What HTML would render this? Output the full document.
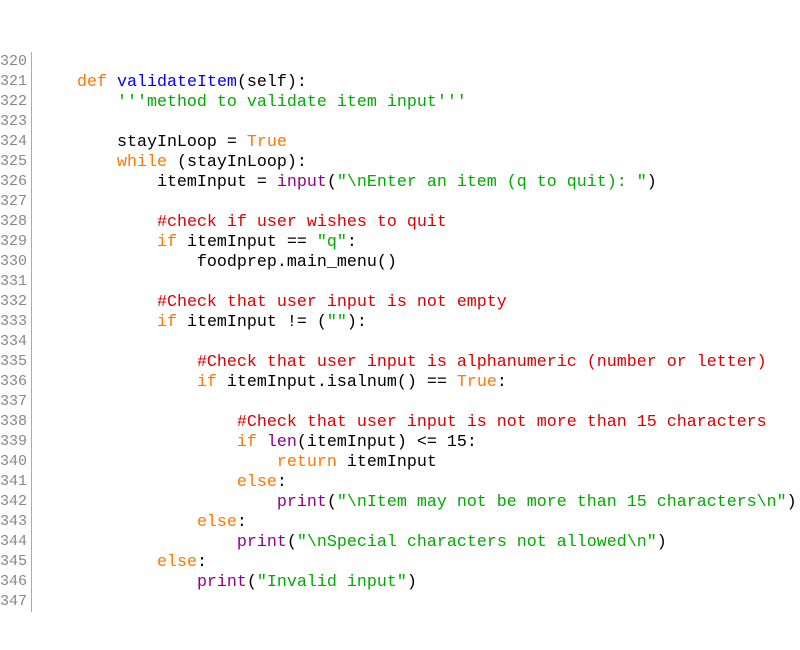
<!DOCTYPE html>
<html><head><style>
body{margin:0;background:#fff;width:800px;height:650px;overflow:hidden}
.wrap{position:absolute;top:51px;left:0;font-family:"Liberation Mono",monospace;font-size:16.67px;line-height:20px}
.ln{position:absolute;left:0;top:1px;width:31px;border-right:1px solid #aaa;color:#888;font-size:15px;white-space:pre}
.code{position:absolute;left:37px;top:2px;white-space:pre;color:#000}
.k{color:#ff7700}.f{color:#0000ff}.s{color:#00aa00}.c{color:#dd0000}.b{color:#900090}
</style></head><body>
<div class="wrap">
<div class="ln">320
321
322
323
324
325
326
327
328
329
330
331
332
333
334
335
336
337
338
339
340
341
342
343
344
345
346
347</div>
<div class="code">
    <span class="k">def</span> <span class="f">validateItem</span>(self):
        <span class="s">'''method to validate item input'''</span>

        stayInLoop = <span class="k">True</span>
        <span class="k">while</span> (stayInLoop):
            itemInput = <span class="b">input</span>(<span class="s">"\nEnter an item (q to quit): "</span>)

            <span class="c">#check if user wishes to quit</span>
            <span class="k">if</span> itemInput == <span class="s">"q"</span>:
                foodprep.main_menu()

            <span class="c">#Check that user input is not empty</span>
            <span class="k">if</span> itemInput != (<span class="s">""</span>):

                <span class="c">#Check that user input is alphanumeric (number or letter)</span>
                <span class="k">if</span> itemInput.isalnum() == <span class="k">True</span>:

                    <span class="c">#Check that user input is not more than 15 characters</span>
                    <span class="k">if</span> <span class="b">len</span>(itemInput) &lt;= 15:
                        <span class="k">return</span> itemInput
                    <span class="k">else</span>:
                        <span class="b">print</span>(<span class="s">"\nItem may not be more than 15 characters\n"</span>)
                <span class="k">else</span>:
                    <span class="b">print</span>(<span class="s">"\nSpecial characters not allowed\n"</span>)
            <span class="k">else</span>:
                <span class="b">print</span>(<span class="s">"Invalid input"</span>)
</div>
</div>
</body></html>
